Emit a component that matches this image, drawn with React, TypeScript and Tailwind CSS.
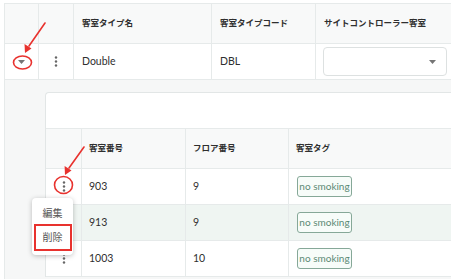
import React from "react";

const Dots = () => (
  <svg width="4" height="11" viewBox="0 0 4 11">
    <circle cx="2" cy="1.5" r="1.2" fill="#666" />
    <circle cx="2" cy="5.5" r="1.2" fill="#666" />
    <circle cx="2" cy="9.5" r="1.2" fill="#666" />
  </svg>
);

const Caret = () => (
  <svg width="7" height="4" viewBox="0 0 7 4">
    <path d="M0 0 L7 0 L3.5 4 Z" fill="#757575" />
  </svg>
);

const Tag = () => (
  <span className="inline-flex h-[21px] w-[55px] items-center justify-center whitespace-nowrap rounded-[3px] border border-[#86a898] bg-[#f7fcf9] text-[10px] text-[#5b8a74]">
    no smoking
  </span>
);

export default function App() {
  const font = { fontFamily: 'Lato, "Noto Sans CJK JP", sans-serif' };
  return (
    <div className="relative h-[279px] w-[451px] overflow-hidden bg-white text-[#2f2f2f]" style={font}>
      <div className="pl-[4px] pt-[3px]">
        <div className="border-l border-t border-[#e6eaea]">
          {/* header */}
          <div className="flex h-[40px] whitespace-nowrap border-b border-[#e6eaea] bg-[#f8f9f9] text-[8.5px] font-bold text-[#2f2f2f]">
            <div className="w-[34px] border-r border-[#e6eaea]" />
            <div className="w-[35px] border-r border-[#e6eaea]" />
            <div className="flex w-[138px] items-center border-r border-[#e6eaea] pl-[8px]">客室タイプ名</div>
            <div className="flex w-[104px] items-center border-r border-[#e6eaea] pl-[8px]">客室タイプコード</div>
            <div className="flex flex-1 items-center pl-[8px]">サイトコントローラー客室</div>
          </div>
          {/* row */}
          <div className="flex h-[36px] border-b border-[#e6eaea] bg-white text-[10.5px]">
            <div className="flex w-[34px] items-center justify-center border-r border-[#e6eaea]">
              <Caret />
            </div>
            <div className="flex w-[35px] items-center justify-center border-r border-[#e6eaea]">
              <Dots />
            </div>
            <div className="flex w-[138px] items-center border-r border-[#e6eaea] pl-[8px]">Double</div>
            <div className="flex w-[104px] items-center border-r border-[#e6eaea] pl-[8px]">DBL</div>
            <div className="flex flex-1 items-center pl-[7px]">
              <div className="flex h-[29px] w-[124px] items-center justify-end rounded-[4px] border border-[#dde1e1] bg-white pr-[10px]">
                <Caret />
              </div>
            </div>
          </div>
          {/* expanded */}
          <div className="h-[200px] bg-[#f6f7f7] pl-[40px] pt-[12px]">
            <div className="rounded-tl-[4px] border-l border-t border-[#e2e6e6] bg-white">
              <div className="h-[36px] border-b border-[#e6eaea]" />
              <div className="flex h-[40px] whitespace-nowrap border-b border-[#e6eaea] bg-[#f8f9f9] text-[8.5px] font-bold">
                <div className="w-[36px] border-r border-[#e6eaea]" />
                <div className="flex w-[104px] items-center border-r border-[#e6eaea] pl-[7px]">客室番号</div>
                <div className="flex w-[103px] items-center border-r border-[#e6eaea] pl-[7px]">フロア番号</div>
                <div className="flex flex-1 items-center pl-[7px]">客室タグ</div>
              </div>
              {[
                { n: "903", f: "9", bg: "bg-white" },
                { n: "913", f: "9", bg: "bg-[#eff5f2]" },
                { n: "1003", f: "10", bg: "bg-white" },
              ].map((r) => (
                <div key={r.n} className={`flex h-[36px] border-b border-[#e6eaea] text-[10.5px] ${r.bg}`}>
                  <div className="flex w-[36px] items-center justify-center border-r border-[#e6eaea]">
                    <Dots />
                  </div>
                  <div className="flex w-[104px] items-center border-r border-[#e6eaea] pl-[7px]">{r.n}</div>
                  <div className="flex w-[103px] items-center border-r border-[#e6eaea] pl-[7px]">{r.f}</div>
                  <div className="flex flex-1 items-center pl-[8px]">
                    <Tag />
                  </div>
                </div>
              ))}
            </div>
          </div>
        </div>
      </div>

      {/* popup menu */}
      <div className="absolute left-[32px] top-[198px] flex h-[57px] w-[41px] flex-col items-center rounded-[4px] bg-white pt-[7px] text-[10px] text-[#555] shadow-[0_1px_5px_rgba(0,0,0,0.25)]">
        <div className="flex h-[16px] items-center">編集</div>
        <div className="mt-[3px] flex h-[27px] w-[38px] items-center justify-center border-2 border-[#e8322e]">削除</div>
      </div>

      {/* annotations */}
      <svg className="pointer-events-none absolute left-0 top-0" width="451" height="279" viewBox="0 0 451 279">
        <g stroke="#e8322e" strokeWidth="1.6" fill="none" strokeLinecap="round">
          <line x1="45" y1="23" x2="29" y2="46" />
          <ellipse cx="22.5" cy="62.5" rx="9" ry="6.5" />
          <line x1="84" y1="147" x2="69" y2="168" />
          <ellipse cx="63.5" cy="185" rx="9" ry="8.5" />
        </g>
        <path d="M25 53 L24.5 44 L31.5 48.5 Z" fill="#e8322e" />
        <path d="M65 175 L64.6 166 L71.5 170.5 Z" fill="#e8322e" />
      </svg>
    </div>
  );
}
